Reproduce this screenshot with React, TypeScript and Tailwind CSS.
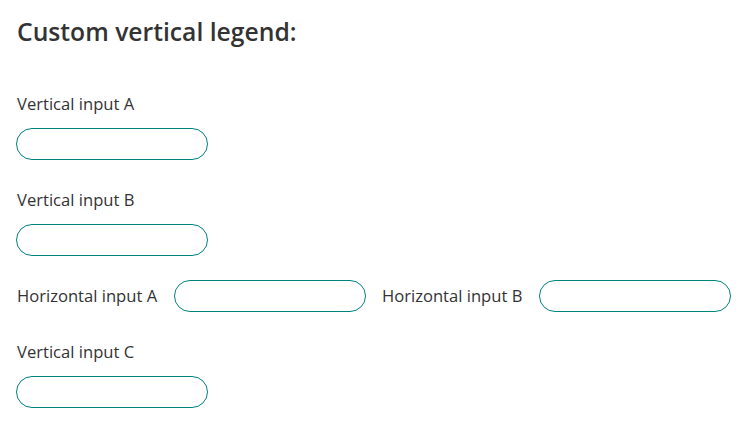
import React from "react";

const inputCls =
  "block w-[192px] h-[32px] rounded-full border border-[#00827f] bg-white outline-none px-3";

function VField({ label, mt }: { label: string; mt: string }) {
  return (
    <div className={`flex flex-col ${mt}`}>
      <label className="h-[24px] leading-[24px] text-[16.6px] text-[#333] pl-[1px]">{label}</label>
      <input className={`${inputCls} mt-[12px]`} />
    </div>
  );
}

export default function App() {
  return (
    <div className="bg-white min-h-[424px] px-[16px] pt-[16px]" style={{ fontFamily: "'Open Sans', sans-serif" }}>
      <h2 className="h-[32px] leading-[32px] text-[24.7px] font-semibold text-[#333] pl-[1px]">Custom vertical legend:</h2>
      <VField label="Vertical input A" mt="mt-[44px]" />
      <VField label="Vertical input B" mt="mt-[28px]" />
      <div className="flex items-center mt-[24px]">
        <label className="text-[16.6px] text-[#333] pl-[1px] w-[141px] whitespace-nowrap">Horizontal input A</label>
        <input className={`${inputCls} ml-[17px]`} />
        <label className="text-[16.6px] text-[#333] ml-[16px] w-[141px] whitespace-nowrap">Horizontal input B</label>
        <input className={`${inputCls} ml-[16px]`} />
      </div>
      <VField label="Vertical input C" mt="mt-[28px]" />
    </div>
  );
}
